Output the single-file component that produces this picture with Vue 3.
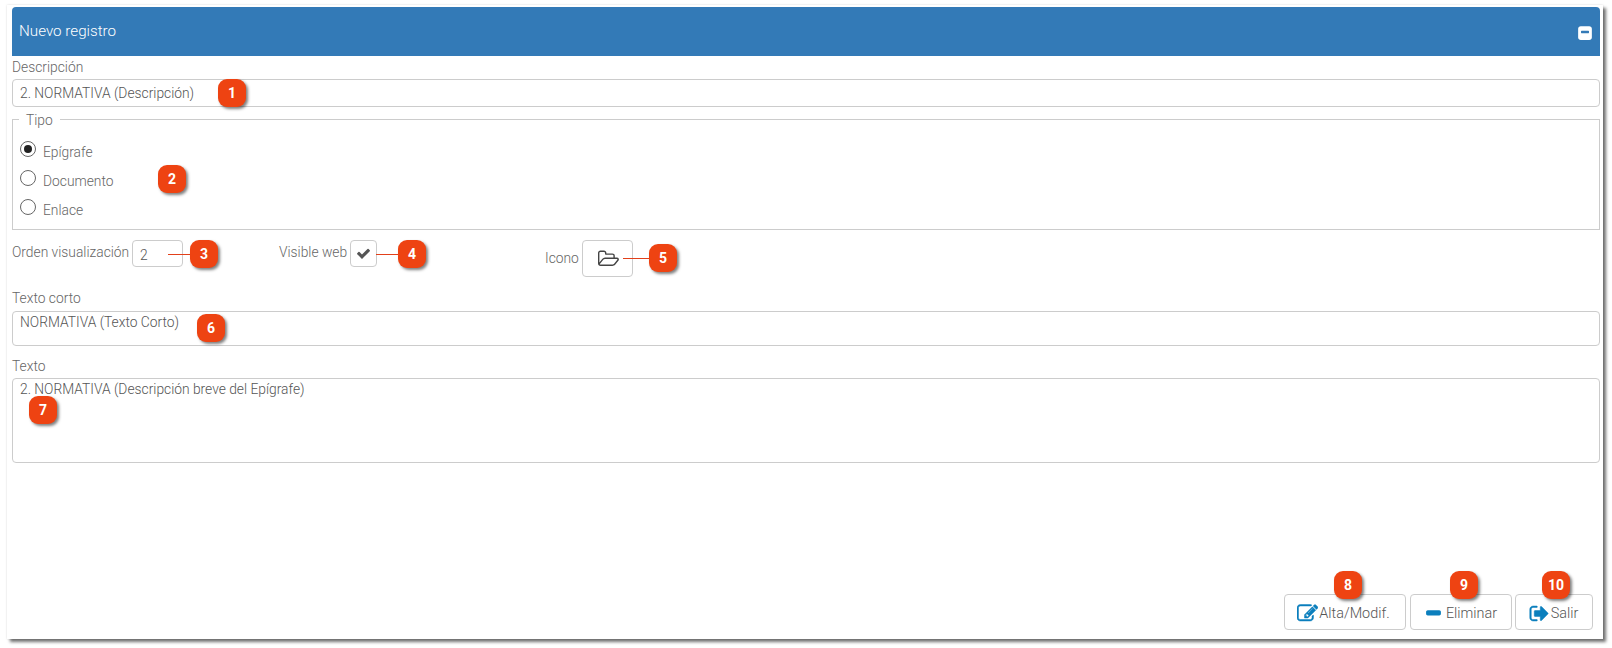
<template>
  <div class="page">
    <section class="panel">
      <header class="panel-head">
        <span class="panel-title">Nuevo registro</span>
        <svg class="collapse-icon" viewBox="0 0 1792 1792"><path :d="icons.minusSquare" /></svg>
      </header>

      <form class="form" @submit.prevent>
        <label class="lbl lbl-first">Descripción</label>
        <input class="field field-desc" type="text" value="2. NORMATIVA (Descripción)" />

        <fieldset class="tipo">
          <legend>Tipo</legend>
          <label v-for="opt in tipos" :key="opt" class="radio-row">
            <span :class="['radio', { 'radio-on': opt === tipo }]"></span>
            <span class="radio-text">{{ opt }}</span>
          </label>
        </fieldset>

        <div class="inline-row">
          <label class="lbl-inline lbl-orden">Orden visualización</label>
          <input class="field field-orden" type="text" value="2" />
          <label class="lbl-inline lbl-visible">Visible web</label>
          <span class="check-box">
            <svg class="check-icon" viewBox="0 0 1792 1792"><path :d="icons.check" /></svg>
          </span>
          <label class="lbl-inline lbl-icono">Icono</label>
          <button class="icon-btn" type="button">
            <svg class="folder-icon" viewBox="0 0 1920 1792"><path :d="icons.folder" /></svg>
          </button>
        </div>

        <label class="lbl lbl-corto">Texto corto</label>
        <textarea class="field area area-corto" :value="textoCorto"></textarea>

        <label class="lbl lbl-texto">Texto</label>
        <textarea class="field area area-texto" :value="texto"></textarea>

        <div class="actions">
          <button v-for="b in botones" :key="b.label" :class="['action', b.cls]" type="button">
            <svg class="action-icon" viewBox="0 0 1792 1792"><path :d="b.icon" /></svg>
            <span>{{ b.label }}</span>
          </button>
        </div>
      </form>
    </section>

    <i
      v-for="l in lines"
      :key="l.x"
      class="leader"
      :style="{ left: l.x + 'px', top: l.y + 'px', width: l.w + 'px' }"
    ></i>
    <span
      v-for="m in markers"
      :key="m.n"
      class="marker"
      :style="{ left: m.x + 'px', top: m.y + 'px' }"
    >{{ m.n }}</span>
  </div>
</template>

<script setup>
const icons = {
  minusSquare: 'M1344 960v-128q0-26-19-45t-45-19h-768q-26 0-45 19t-19 45v128q0 26 19 45t45 19h768q26 0 45-19t19-45zm320-416v960q0 119-84.5 203.5t-203.5 84.5h-960q-119 0-203.5-84.5t-84.5-203.5v-960q0-119 84.5-203.5t203.5-84.5h960q119 0 203.5 84.5t84.5 203.5z',
  check: 'M1671 566q0 40-28 68l-724 724-136 136q-28 28-68 28t-68-28l-136-136-362-362q-28-28-28-68t28-68l136-136q28-28 68-28t68 28l294 295 656-657q28-28 68-28t68 28l136 136q28 28 28 68z',
  folder: 'M1781 931q0-35-53-35h-1088q-40 0-85.5 21.5t-71.5 52.5l-294 363q-18 24-18 40 0 35 53 35h1088q40 0 86-22t71-53l294-363q18-22 18-39zm-1141-163h768v-160q0-40-28-68t-68-28h-576q-40 0-68-28t-28-68v-64q0-40-28-68t-68-28h-320q-40 0-68 28t-28 68v853l256-315q44-53 116-87.5t140-34.5zm1269 163q0 62-46 120l-295 363q-43 53-116 87.5t-140 34.5h-1088q-92 0-158-66t-66-158v-960q0-92 66-158t158-66h320q92 0 158 66t66 158v32h544q92 0 158 66t66 158v160h192q54 0 99 24.5t67 70.5q15 32 15 68z',
  edit: 'M888 1184l116-116-152-152-116 116v56h96v96h56zm440-720q-16-16-33 1l-350 350q-17 17-1 33t33-1l350-350q17-17 1-33zm80 594v190q0 119-84.5 203.5t-203.5 84.5h-832q-119 0-203.5-84.5t-84.5-203.5v-832q0-119 84.5-203.5t203.5-84.5h832q63 0 117 25 15 7 18 23 3 17-9 29l-49 49q-14 14-32 8-23-6-45-6h-832q-66 0-113 47t-47 113v832q0 66 47 113t113 47h832q66 0 113-47t47-113v-126q0-13 9-22l64-64q15-15 35-7t20 29zm-96-738l288 288-672 672h-288v-288zm444 132l-92 92-288-288 92-92q28-28 68-28t68 28l152 152q28 28 28 68t-28 68z',
  minus: 'M1600 736v192q0 40-28 68t-68 28h-1216q-40 0-68-28t-28-68v-192q0-40 28-68t68-28h1216q40 0 68 28t28 68z',
  signOut: 'M704 1440q0 4 1 20t.5 26.5-3 23.5-10 19.5-20.5 6.5h-320q-119 0-203.5-84.5t-84.5-203.5v-704q0-119 84.5-203.5t203.5-84.5h320q13 0 22.5 9.5t9.5 22.5q0 4 1 20t.5 26.5-3 23.5-10 19.5-20.5 6.5h-320q-66 0-113 47t-47 113v704q0 66 47 113t113 47h312l11.5 1 11.5 3 8 5.5 7 9 2 13.5zm928-544q0 26-19 45l-544 544q-19 19-45 19t-45-19-19-45v-288h-448q-26 0-45-19t-19-45v-384q0-26 19-45t45-19h448v-288q0-26 19-45t45-19 45 19l544 544q19 19 19 45z'
}

const tipos = ['Epígrafe', 'Documento', 'Enlace']
const tipo = 'Epígrafe'
const textoCorto = 'NORMATIVA (Texto Corto)'
const texto = '2. NORMATIVA (Descripción breve del Epígrafe)'

const botones = [
  { label: 'Alta/Modif.', icon: icons.edit, cls: 'action-alta' },
  { label: 'Eliminar', icon: icons.minus, cls: 'action-eliminar' },
  { label: 'Salir', icon: icons.signOut, cls: 'action-salir' }
]

// numbered callouts drawn on top of the screenshot
const markers = [
  { n: 1, x: 218, y: 79 },
  { n: 2, x: 158, y: 165 },
  { n: 3, x: 190, y: 240 },
  { n: 4, x: 398, y: 240 },
  { n: 5, x: 649, y: 244 },
  { n: 6, x: 197, y: 314 },
  { n: 7, x: 29, y: 396 },
  { n: 8, x: 1334, y: 571 },
  { n: 9, x: 1450, y: 571 },
  { n: 10, x: 1542, y: 571 }
]

const lines = [
  { x: 168, y: 254, w: 24 },
  { x: 376, y: 254, w: 24 },
  { x: 623, y: 258, w: 28 }
]
</script>

<style>
html, body {
  margin: 0;
  background: #fff;
  overflow: hidden;
}
</style>

<style scoped>
.page {
  position: relative;
  width: 1612px;
  height: 648px;
  padding: 5px 9px 9px 7px;
  box-sizing: border-box;
  font-family: Roboto, "Liberation Sans", sans-serif;
  font-size: 13.8px;
  font-weight: 300;
  color: #555;
}

.panel {
  height: 100%;
  box-sizing: border-box;
  padding: 2px 3px 0 5px;
  background: #fff;
  box-shadow: 3px 3px 3px rgba(0, 0, 0, 0.55), 0 0 2px rgba(0, 0, 0, 0.15);
  display: flex;
  flex-direction: column;
}

.panel-head {
  height: 49px;
  flex-shrink: 0;
  background: #337ab7;
  border-radius: 4px 4px 0 0;
  color: #fff;
  display: flex;
  align-items: center;
  justify-content: space-between;
  padding: 0 7px 2px 7px;
  box-sizing: border-box;
  font-size: 15.2px;
}

.collapse-icon {
  width: 16px;
  height: 16px;
  fill: #fff;
  margin-top: 2px;
}

.form {
  flex: 1;
  display: flex;
  flex-direction: column;
  min-height: 0;
}

.lbl {
  display: block;
  height: 20px;
  line-height: 20px;
  color: #666;
}

.lbl-first { margin-top: 1px; margin-bottom: 2px; }
.lbl-corto { margin-top: 11px; margin-bottom: 3px; }
.lbl-texto { margin-top: 10px; margin-bottom: 2px; }

.field {
  display: block;
  box-sizing: border-box;
  border: 1px solid #ccc;
  border-radius: 4px;
  background: #fff;
  font: inherit;
  color: #555;
  outline: none;
  padding: 0 7px;
}

.field-desc {
  width: 100%;
  height: 28px;
}

.tipo {
  margin: 4px 0 0;
  padding: 13px 7px 0;
  height: 119px;
  box-sizing: border-box;
  border: 1px solid #ccc;
  min-width: 0;
}

.tipo legend {
  margin-left: -1px;
  padding: 0 7px;
  line-height: 16px;
  color: #666;
  position: relative;
  top: 1px;
}

.radio-row {
  display: flex;
  height: 29px;
}

.radio {
  width: 16px;
  height: 16px;
  box-sizing: border-box;
  border: 1px solid #666;
  border-radius: 50%;
  background: #fff;
  margin-top: 1px;
  position: relative;
}

.radio-on::after {
  content: '';
  position: absolute;
  inset: 3px;
  border-radius: 50%;
  background: #222;
}

.radio-text {
  margin-left: 7px;
  line-height: 20px;
  margin-top: 2px;
  color: #666;
}

.inline-row {
  display: flex;
  align-items: flex-start;
  margin-top: 10px;
  height: 37px;
}

.lbl-inline {
  line-height: 24px;
  color: #666;
}

.lbl-orden { width: 116px; white-space: nowrap; }

.field-orden {
  width: 51px;
  height: 27px;
  margin-left: 4px;
  padding-top: 3px;
}

.lbl-visible { margin-left: 96px; width: 67px; white-space: nowrap; }

.check-box {
  width: 27px;
  height: 27px;
  margin-left: 4px;
  box-sizing: border-box;
  border: 1px solid #ccc;
  border-radius: 4px;
  display: flex;
  align-items: center;
  justify-content: center;
}

.check-icon {
  width: 15px;
  height: 15px;
  fill: #555;
}

.lbl-icono {
  margin-left: 168px;
  line-height: 37px;
  width: 33px;
}

.icon-btn {
  width: 51px;
  height: 37px;
  margin-left: 4px;
  padding: 0 0 0 1px;
  border: 1px solid #ccc;
  border-radius: 4px;
  background: #fff;
  display: flex;
  align-items: center;
  justify-content: center;
}

.folder-icon {
  width: 21px;
  height: 20px;
  fill: #444;
}

.area {
  width: 100%;
  resize: none;
  line-height: 20px;
}

.area-corto { height: 35px; }
.area-texto { height: 85px; }

.actions {
  margin-top: auto;
  margin-bottom: 9px;
  margin-right: 7px;
  display: flex;
  justify-content: flex-end;
  gap: 4px;
}

.action {
  height: 36px;
  box-sizing: border-box;
  padding: 2px 0 0;
  border: 1px solid #ccc;
  border-radius: 4px;
  background: #fff;
  font: inherit;
  font-size: 14.4px;
  color: #555;
  display: flex;
  align-items: center;
  justify-content: center;
  gap: 1px;
}

.action-alta { width: 122px; padding-right: 3px; }
.action-eliminar { width: 102px; margin-right: -1px; }
.action-salir { width: 78px; padding-right: 1px; }

.action-icon {
  width: 21px;
  height: 21px;
  fill: #0b7fbd;
  stroke: #0b7fbd;
  stroke-width: 40;
}

.action-eliminar .action-icon {
  width: 17px;
  height: 17px;
  stroke-width: 150;
  margin-right: 3px;
}

.leader {
  position: absolute;
  height: 1px;
  background: #e2401a;
}

.marker {
  position: absolute;
  width: 28px;
  height: 28px;
  border-radius: 9px;
  background: #ee4312;
  color: #fff;
  font-family: "Liberation Sans Narrow", Roboto, sans-serif;
  font-size: 14px;
  font-weight: 700;
  line-height: 28px;
  text-align: center;
  box-shadow: 2px 2px 3px rgba(0, 0, 0, 0.5);
}
</style>
